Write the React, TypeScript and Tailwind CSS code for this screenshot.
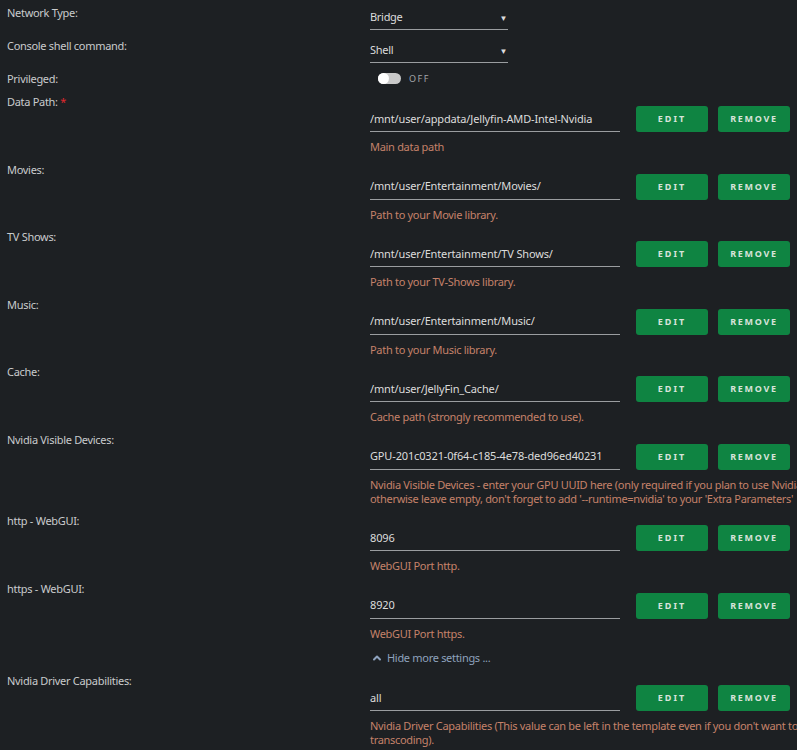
import { ChevronUp } from 'lucide-react';

interface PathRow {
  label: string;
  value: string;
  description: string[];
  required?: boolean;
}

const rowsTop: PathRow[] = [
  { label: 'Data Path:', value: '/mnt/user/appdata/Jellyfin-AMD-Intel-Nvidia', description: ['Main data path'], required: true },
  { label: 'Movies:', value: '/mnt/user/Entertainment/Movies/', description: ['Path to your Movie library.'] },
  { label: 'TV Shows:', value: '/mnt/user/Entertainment/TV Shows/', description: ['Path to your TV-Shows library.'] },
  { label: 'Music:', value: '/mnt/user/Entertainment/Music/', description: ['Path to your Music library.'] },
  { label: 'Cache:', value: '/mnt/user/JellyFin_Cache/', description: ['Cache path (strongly recommended to use).'] },
  {
    label: 'Nvidia Visible Devices:',
    value: 'GPU-201c0321-0f64-c185-4e78-ded96ed40231',
    description: [
      "Nvidia Visible Devices - enter your GPU UUID here (only required if you plan to use Nvidia for transcoding),",
      "otherwise leave empty, don't forget to add '--runtime=nvidia' to your 'Extra Parameters'",
    ],
  },
  { label: 'http - WebGUI:', value: '8096', description: ['WebGUI Port http.'] },
  { label: 'https - WebGUI:', value: '8920', description: ['WebGUI Port https.'] },
];

const rowsBottom: PathRow[] = [
  {
    label: 'Nvidia Driver Capabilities:',
    value: 'all',
    description: [
      "Nvidia Driver Capabilities (This value can be left in the template even if you don't want to use Nvidia for",
      'transcoding).',
    ],
  },
];

function SettingBlock({ row }: { row: PathRow }) {
  return (
    <div className="flex pb-[7.5px]">
      <div className="w-[370px] shrink-0 pl-[7px] leading-[16px] text-[#c9cbcd]">
        {row.label}
        {row.required && <span className="text-[#e0282e]"> *</span>}
      </div>
      <div className="flex-1 min-w-0 pt-[12px]">
        <div className="flex items-center">
          <div className="w-[250px] h-[26px] pt-[1px] flex items-center border-b border-[#9a9da0] text-[#dcdcdc] tracking-[-0.15px] whitespace-nowrap overflow-hidden">
            {row.value}
          </div>
          <button className="ml-[16px] w-[72px] h-[26px] rounded-[3px] bg-[#0f8442] text-[#d7e3da] text-[9px] font-bold tracking-[2px]">
            EDIT
          </button>
          <button className="ml-[10px] w-[72px] h-[26px] rounded-[3px] bg-[#0f8442] text-[#d7e3da] text-[9px] font-bold tracking-[1.7px] shrink-0">
            REMOVE
          </button>
        </div>
        <div className="mt-[8px] leading-[14px] text-[#c5826a] whitespace-nowrap">
          {row.description.map((d, i) => (
            <div key={i}>{d}</div>
          ))}
        </div>
      </div>
    </div>
  );
}

function SelectRow({ label, value }: { label: string; value: string }) {
  return (
    <div className="flex h-[33px]">
      <div className="w-[370px] shrink-0 pl-[7px] pt-[5px] leading-[16px] text-[#c9cbcd]">{label}</div>
      <div className="pt-[6px]">
        <div className="w-[138px] h-[24px] flex items-center justify-between border-b border-[#9a9da0] text-[#dcdcdc]">
          <span>{value}</span>
          <span className="text-[8px] mr-[1px]">▼</span>
        </div>
      </div>
    </div>
  );
}

export default function App() {
  return (
    <div
      className="min-h-screen w-[797px] overflow-hidden bg-[#1d2023] text-[11px] tracking-[-0.3px]"
      style={{ fontFamily: '"Noto Sans", sans-serif' }}
    >
      <SelectRow label="Network Type:" value="Bridge" />
      <SelectRow label="Console shell command:" value="Shell" />

      {/* Privileged toggle */}
      <div className="flex h-[28px]">
        <div className="w-[370px] shrink-0 pl-[7px] pt-[5px] leading-[16px] text-[#c9cbcd]">Privileged:</div>
        <div className="pt-[7px] pl-[8px] flex items-start">
          <div className="w-[23px] h-[11px] rounded-full bg-[#c9c9c9] relative">
            <div className="absolute left-0 top-0 w-[11px] h-[11px] rounded-full bg-white" />
          </div>
          <span className="ml-[8px] leading-[12px] text-[9px] tracking-[1.5px] text-[#a3a6a9]">OFF</span>
        </div>
      </div>

      {rowsTop.map((row) => (
        <SettingBlock key={row.label} row={row} />
      ))}

      <div className="pl-[371px] pt-[2px] pb-[7px] leading-[16px] flex items-center text-[#8ea2bd]">
        <ChevronUp size={12} strokeWidth={4} />
        <span className="ml-[4px]">Hide more settings ...</span>
      </div>

      {rowsBottom.map((row) => (
        <SettingBlock key={row.label} row={row} />
      ))}
    </div>
  );
}
